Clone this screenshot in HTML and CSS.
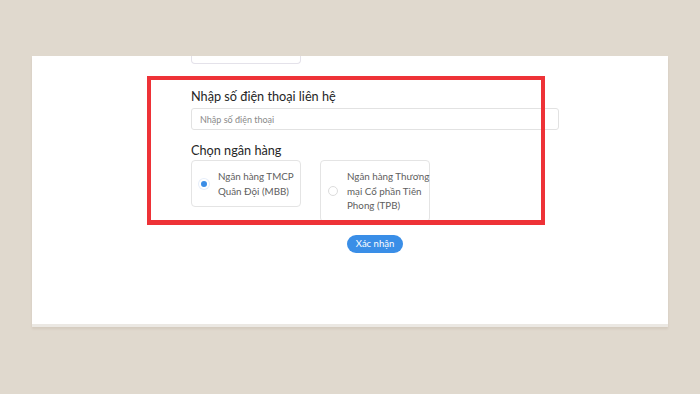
FILE: index.html
```html
<!DOCTYPE html>
<html lang="vi">
<head>
<meta charset="utf-8">
<title>Chọn ngân hàng</title>
<link rel="stylesheet" href="styles.css">
</head>
<body>
<div class="panel">
  <div class="form">
    <div class="stub"></div>
    <div class="label first">Nhập số điện thoại liên hệ</div>
    <div class="input"><span class="placeholder">Nhập số điện thoại</span></div>
    <div class="label second">Chọn ngân hàng</div>
    <div class="banks">
      <div class="bank">
        <span class="radio checked"></span>
        <span class="bank-name">Ngân hàng TMCP<br>Quân Đội (MBB)</span>
      </div>
      <div class="bank">
        <span class="radio"></span>
        <span class="bank-name">Ngân hàng Thương<br>mại Cổ phần Tiên<br>Phong (TPB)</span>
      </div>
    </div>
    <button class="submit" type="button">Xác nhận</button>
  </div>
  <div class="highlight"></div>
</div>
</body>
</html>
```
FILE: styles.css
```css
html, body {
  margin: 0;
  padding: 0;
}
body {
  background: #e0d9ce;
  width: 700px;
  height: 394px;
  overflow: hidden;
  font-family: Lato, "Noto Sans", sans-serif;
}
.panel {
  position: relative;
  margin: 56px 0 0 32px;
  width: 636px;
  height: 268px;
  background: #ffffff;
  border-bottom: 3px solid #ebe8e3;
  box-shadow: 0 2px 2px rgba(120, 100, 80, 0.12);
  overflow: hidden;
}
.form {
  margin-left: 159px;
  width: 368px;
  display: flex;
  flex-direction: column;
  align-items: flex-start;
}
.stub {
  width: 110px;
  height: 8px;
  box-sizing: border-box;
  border: 1px solid #e4e2ea;
  border-top: none;
  border-radius: 0 0 4px 4px;
}
.label {
  font-size: 12.7px;
  line-height: 16px;
  color: #262626;
}
.label.first {
  margin-top: 24px;
}
.label.second {
  margin-top: 12px;
}
.input {
  margin-top: 4px;
  width: 368px;
  height: 22px;
  box-sizing: border-box;
  border: 1px solid #e2e2e2;
  border-radius: 3px;
  padding-left: 8px;
  display: flex;
  align-items: center;
}
.placeholder {
  font-size: 9px;
  color: #8a8a8a;
}
.banks {
  margin-top: 2px;
  display: flex;
  align-items: flex-start;
  gap: 19px;
}
.bank {
  width: 110px;
  box-sizing: border-box;
  border: 1px solid #e4e4e4;
  border-radius: 4px;
  padding: 8px 2px 8px 7px;
  display: flex;
  align-items: center;
  gap: 9px;
}
.radio {
  flex: none;
  width: 10px;
  height: 10px;
  box-sizing: border-box;
  border-radius: 50%;
  border: 1px solid #dcdcdc;
  background: #ffffff;
}
.radio.checked {
  border: 2px solid #ffffff;
  background: #3a8de6;
  box-shadow: 0 0 0 1px #e6eefa;
}
.bank-name {
  font-size: 9.8px;
  line-height: 14.5px;
  color: #606060;
  white-space: nowrap;
}
.submit {
  margin: 13px auto 0;
  width: 56px;
  height: 18px;
  padding: 0;
  border: none;
  border-radius: 9px;
  background: #3a8ee7;
  color: #ffffff;
  font-family: Lato, "Noto Sans", sans-serif;
  font-size: 9.5px;
  line-height: 18px;
}
.highlight {
  position: absolute;
  left: 115px;
  top: 20px;
  width: 398px;
  height: 149px;
  box-sizing: border-box;
  border: 4px solid #ee3237;
  border-bottom-width: 5px;
  pointer-events: none;
}
```
